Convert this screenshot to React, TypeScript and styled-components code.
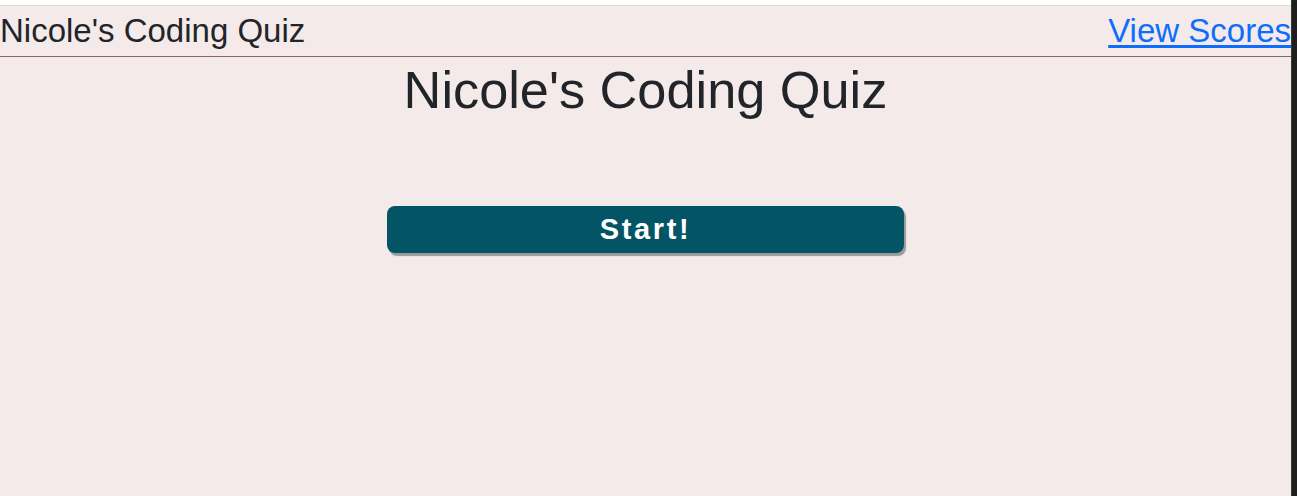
import React from "react";
import styled, { createGlobalStyle } from "styled-components";

const Global = createGlobalStyle`
  html, body { margin: 0; padding: 0; }
  body {
    font-family: "Liberation Sans", Arial, sans-serif;
    background: #ffffff;
    color: #212529;
    overflow: hidden;
  }
`;

const Frame = styled.div`
  display: flex;
  width: 1297px;
  height: 496px;
`;

const Page = styled.div`
  flex: 1;
  display: flex;
  flex-direction: column;
  padding-top: 5px;
  background: #ffffff;
  min-width: 0;
`;

const Sheet = styled.div`
  flex: 1;
  display: flex;
  flex-direction: column;
  background: #f5eaea;
  border-top: 1px solid #dcdcdc;
`;

const Header = styled.header`
  display: flex;
  justify-content: space-between;
  align-items: center;
  font-size: 33px;
  line-height: 50px;
  border-bottom: 1px solid #8a6666;
  white-space: nowrap;
`;

const Brand = styled.span`
  color: #212529;
`;

const ScoresLink = styled.a`
  color: #0d6efd;
  text-decoration: underline;
  text-underline-offset: 3px;
  cursor: pointer;
`;

const Main = styled.main`
  display: flex;
  flex-direction: column;
  align-items: center;
`;

const Title = styled.h1`
  margin: 2px 0 0;
  font-size: 52.3px;
  font-weight: 400;
  line-height: 62px;
  color: #212529;
`;

const StartButton = styled.button`
  margin-top: 85px;
  width: 40%;
  height: 47px;
  border: none;
  border-radius: 8px;
  background: #035566;
  color: #ffffff;
  font-family: "Liberation Sans", Arial, sans-serif;
  font-size: 29px;
  font-weight: 700;
  letter-spacing: 2.6px;
  box-shadow: 2px 3px 1px #9a9a9a;
  cursor: pointer;
`;

const SideBar = styled.div`
  width: 6px;
  background: #1f1f1f;
  border-left: 1px solid #3a3a3a;
  box-sizing: border-box;
`;

export default function App() {
  return (
    <>
      <Global />
      <Frame>
        <Page>
          <Sheet>
            <Header>
              <Brand>Nicole's Coding Quiz</Brand>
              <ScoresLink>View Scores</ScoresLink>
            </Header>
            <Main>
              <Title>Nicole's Coding Quiz</Title>
              <StartButton>Start!</StartButton>
            </Main>
          </Sheet>
        </Page>
        <SideBar />
      </Frame>
    </>
  );
}
